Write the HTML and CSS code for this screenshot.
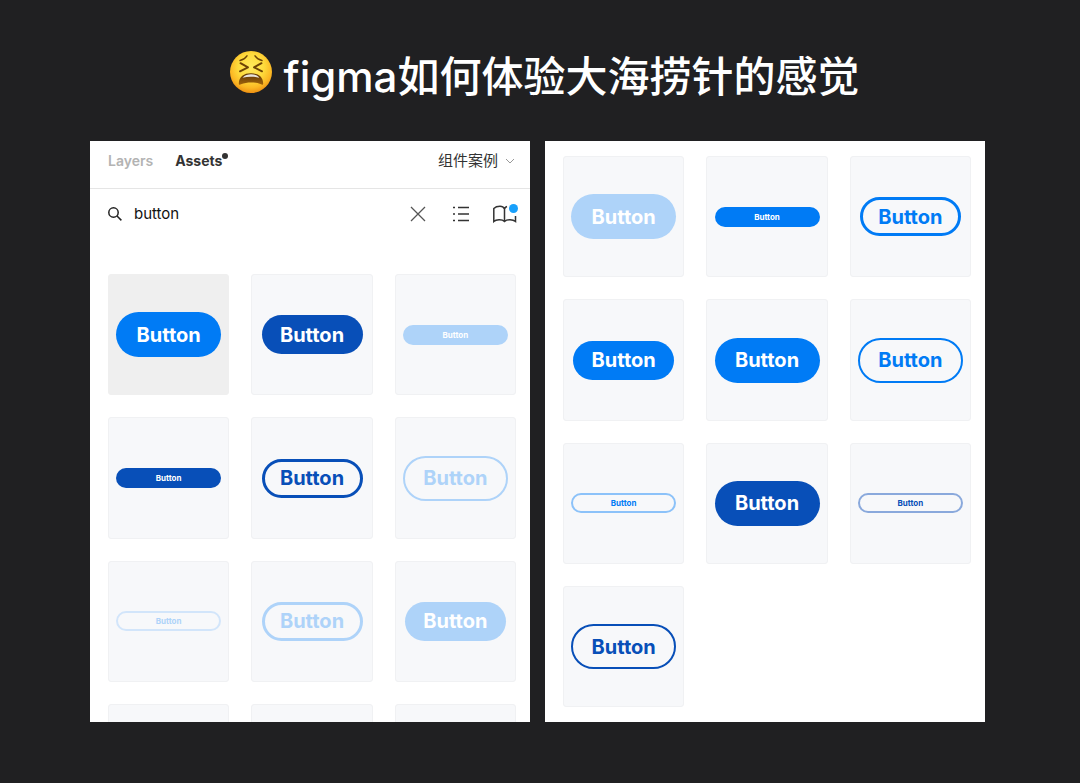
FILE: index.html
```html
<!DOCTYPE html>
<html lang="zh-CN">
<head>
  <meta charset="UTF-8">
  <meta name="viewport" content="width=device-width, initial-scale=1.0">
  <title>figma如何体验大海捞针的感觉</title>
  <link rel="stylesheet" href="styles.css">
</head>
<body>

<h1 class="title">
  <svg class="emoji" viewBox="0 0 42 42" aria-hidden="true">
    <defs>
      <radialGradient id="face" cx="50%" cy="38%" r="62%">
        <stop offset="0" stop-color="#ffe95c"/>
        <stop offset="0.5" stop-color="#fedb3c"/>
        <stop offset="0.8" stop-color="#fbb824"/>
        <stop offset="1" stop-color="#ee9113"/>
      </radialGradient>
      <linearGradient id="mouth" x1="0" y1="0" x2="0" y2="1">
        <stop offset="0" stop-color="#5d3507"/>
        <stop offset="1" stop-color="#a0640b"/>
      </linearGradient>
    </defs>
    <circle cx="21" cy="21" r="21" fill="url(#face)"/>
    <g fill="none" stroke="#6d4305" stroke-linecap="round" stroke-linejoin="round">
      <path d="M10 9.500Q14.500 8.500 17 4.800M32 9.500Q27.500 8.500 25 4.800" stroke-width="1.400"/>
      <path d="M10.500 12.200L18 16.300L10 20.300M31.500 12.200L24 16.300L32 20.300" stroke-width="1.900"/>
    </g>
    <path d="M8.800 32.500C9 25.500 14 22.300 21 22.300S33 25.500 33.200 32.500C33.200 34 32 34 31 33.300C25 30.800 17 30.800 11 33.300C10 34 8.800 34 8.800 32.500Z" fill="url(#mouth)"/>
    <path d="M12.500 26.800C15 23.700 18 23.200 21 23.200S27 23.700 29.500 26.800C24 25.300 18 25.300 12.500 26.800Z" fill="#e9e4dc"/>
  </svg>
  <span>figma如何体验大海捞针的感觉</span>
</h1>

<main class="panels">
  <section class="panel">
    <header class="tabs">
      <button type="button" class="tab">Layers</button>
      <button type="button" class="tab active">Assets</button>
      <div class="page-picker">
        <select class="page-select" aria-label="页面">
          <option>组件案例</option>
        </select>
        <svg class="chevron" viewBox="0 0 10 6" aria-hidden="true"><path d="M1 1l4 4 4-4"/></svg>
      </div>
    </header>

    <div class="search">
      <label class="search-field">
        <svg class="icon-search" viewBox="0 0 14 14" aria-hidden="true"><circle cx="5.500" cy="5.500" r="4.700"/><path d="M9 9l4.400 4.400"/></svg>
        <input class="search-input" type="text" value="button" aria-label="Search assets">
      </label>
      <button type="button" class="tool" aria-label="Clear">
        <svg class="icon thin" viewBox="0 0 24 24"><path d="M6 5l14 14M20 5L6 19"/></svg>
      </button>
      <button type="button" class="tool" aria-label="List view">
        <svg class="icon" viewBox="0 0 24 24"><path d="M4 5.500h2M4 12h2M4 18.500h2M9 5.500h11M9 12h11M9 18.500h11"/></svg>
      </button>
      <button type="button" class="tool" aria-label="Libraries">
        <svg class="icon" viewBox="0 0 24 24"><path d="M11.500 7C10.500 4.800 9 4.300 7 4.300C4.500 4.300 2.500 4.800 .8 6.500V19.500C3 17.500 9 17 11.500 19.500C14 17 20 17.500 22.500 19.500V14M11.500 7V19.500M11.500 7C12 5.500 12.700 4.900 14 4.500"/></svg>
        <span class="badge"></span>
      </button>
    </div>

    <div class="assets clipped">
      <div class="tile selected"><button type="button" class="btn large blue">Button</button></div>
      <div class="tile"><button type="button" class="btn medium navy">Button</button></div>
      <div class="tile"><button type="button" class="btn small pale">Button</button></div>
      <div class="tile"><button type="button" class="btn small navy">Button</button></div>
      <div class="tile"><button type="button" class="btn medium navy outline">Button</button></div>
      <div class="tile"><button type="button" class="btn large pale outline">Button</button></div>
      <div class="tile"><button type="button" class="btn small pale outline">Button</button></div>
      <div class="tile"><button type="button" class="btn medium pale outline">Button</button></div>
      <div class="tile"><button type="button" class="btn medium pale">Button</button></div>
      <div class="tile"></div>
      <div class="tile"></div>
      <div class="tile"></div>
    </div>
  </section>

  <section class="panel">
    <div class="assets continued">
      <div class="tile"><button type="button" class="btn large pale">Button</button></div>
      <div class="tile"><button type="button" class="btn small blue">Button</button></div>
      <div class="tile"><button type="button" class="btn medium blue outline">Button</button></div>
      <div class="tile"><button type="button" class="btn medium blue">Button</button></div>
      <div class="tile"><button type="button" class="btn large blue">Button</button></div>
      <div class="tile"><button type="button" class="btn large blue outline">Button</button></div>
      <div class="tile"><button type="button" class="btn small blue outline">Button</button></div>
      <div class="tile"><button type="button" class="btn large navy">Button</button></div>
      <div class="tile"><button type="button" class="btn small navy outline">Button</button></div>
      <div class="tile"><button type="button" class="btn large navy outline">Button</button></div>
    </div>
  </section>
</main>

</body>
</html>
```
FILE: styles.css
```css
* {
  box-sizing: border-box;
}

body {
  margin: 0;
  padding: 46px 95px 61px 90px;
  background-color: #202022;
  font-family: Inter, "Noto Sans CJK SC", sans-serif;
}

button, input, select {
  margin: 0;
  padding: 0;
  border: 0;
  background: none;
  font-family: inherit;
}

.title {
  display: flex;
  justify-content: center;
  gap: 12px;
  margin: 0;
  padding: 0 0 33px 14px;
  color: #fff;
  font-size: 42px;
  line-height: 62px;
  font-weight: 500;
}

.emoji {
  width: 42px;
  height: 42px;
  margin-top: 5px;
}

.panels {
  display: flex;
  gap: 15px;
}

.panel {
  flex: 1;
  min-width: 0;
  background-color: #fff;
}

/* tabs */

.tabs {
  display: flex;
  align-items: center;
  gap: 22px;
  height: 48px;
  padding: 0 15px 8px 18px;
  border-bottom: 1px solid #e5e5e5;
}

.tab {
  position: relative;
  color: #b3b3b3;
  font-size: 14px;
  line-height: 20px;
  font-weight: 600;
}

.tab.active {
  color: #333;
  font-weight: 700;
}

.tab.active::after {
  content: "";
  position: absolute;
  top: 2px;
  right: -6px;
  width: 6px;
  height: 6px;
  border-radius: 50%;
  background-color: #333;
}

.page-picker {
  display: flex;
  align-items: center;
  gap: 6px;
  margin-left: auto;
}

.page-select {
  appearance: none;
  color: #333;
  font-size: 15px;
  line-height: 20px;
}

.chevron {
  width: 10px;
  height: 6px;
  fill: none;
  stroke: #999;
}

/* search */

.search {
  display: flex;
  align-items: center;
  gap: 20px;
  height: 50px;
  padding: 0 13px 0 18px;
}

.search-field {
  display: flex;
  flex: 1;
  align-items: center;
  gap: 12px;
  min-width: 0;
}

.search-input {
  width: 100%;
  color: #111;
  font-size: 15px;
  line-height: 20px;
}

.icon-search {
  flex: none;
  width: 14px;
  height: 14px;
  fill: none;
  stroke: #222;
  stroke-width: 1.5;
}

.tool {
  position: relative;
  width: 24px;
  height: 24px;
}

.icon {
  display: block;
  width: 24px;
  height: 24px;
  fill: none;
  stroke: #333;
  stroke-width: 1.5;
}

.icon.thin {
  stroke: #555;
  stroke-width: 1.3;
}

.badge {
  position: absolute;
  top: 2px;
  right: -1px;
  width: 9px;
  height: 9px;
  border-radius: 50%;
  background-color: #18a0fb;
}

/* component tiles */

.assets {
  display: grid;
  grid-template-columns: repeat(3, 1fr);
  gap: 22px;
  padding: 35px 14px 0 18px;
}

.assets.clipped {
  max-height: 483px;
  overflow: hidden;
}

.assets.continued {
  padding: 15px 14px 14px 18px;
}

.tile {
  display: flex;
  align-items: center;
  justify-content: center;
  aspect-ratio: 1;
  border: 1px solid #f0f1f3;
  border-radius: 3px;
  background-color: #f7f8fa;
}

.tile.selected {
  border-color: #efefef;
  background-color: #efefef;
}

.btn {
  border: 0 solid;
  border-radius: 24px;
  color: #fff;
  font-size: 20px;
  font-weight: 700;
}

.btn.large {
  width: 105px;
  height: 45px;
}

.btn.medium {
  width: 101px;
  height: 39px;
}

.btn.small {
  width: 105px;
  height: 20px;
  font-size: 8px;
}

.blue {
  background-color: #007bf5;
}

.navy {
  background-color: #084fb8;
}

.pale {
  background-color: #aed3f9;
}

.outline {
  border-width: 2px;
  background-color: transparent;
}

.medium.outline {
  border-width: 3px;
}

.blue.outline {
  border-color: #007bf5;
  color: #007bf5;
}

.navy.outline {
  border-color: #084fb8;
  color: #084fb8;
}

.pale.outline {
  border-color: #aed3f9;
  color: #aed3f9;
}

/* thin strokes read lighter at this size */
.small.outline {
  border-width: 2px;
}

.small.blue.outline {
  border-color: #8cc2f9;
}

.small.navy.outline {
  border-color: #8aa9dc;
}

.small.pale.outline {
  border-color: #d2e5fa;
}
```
